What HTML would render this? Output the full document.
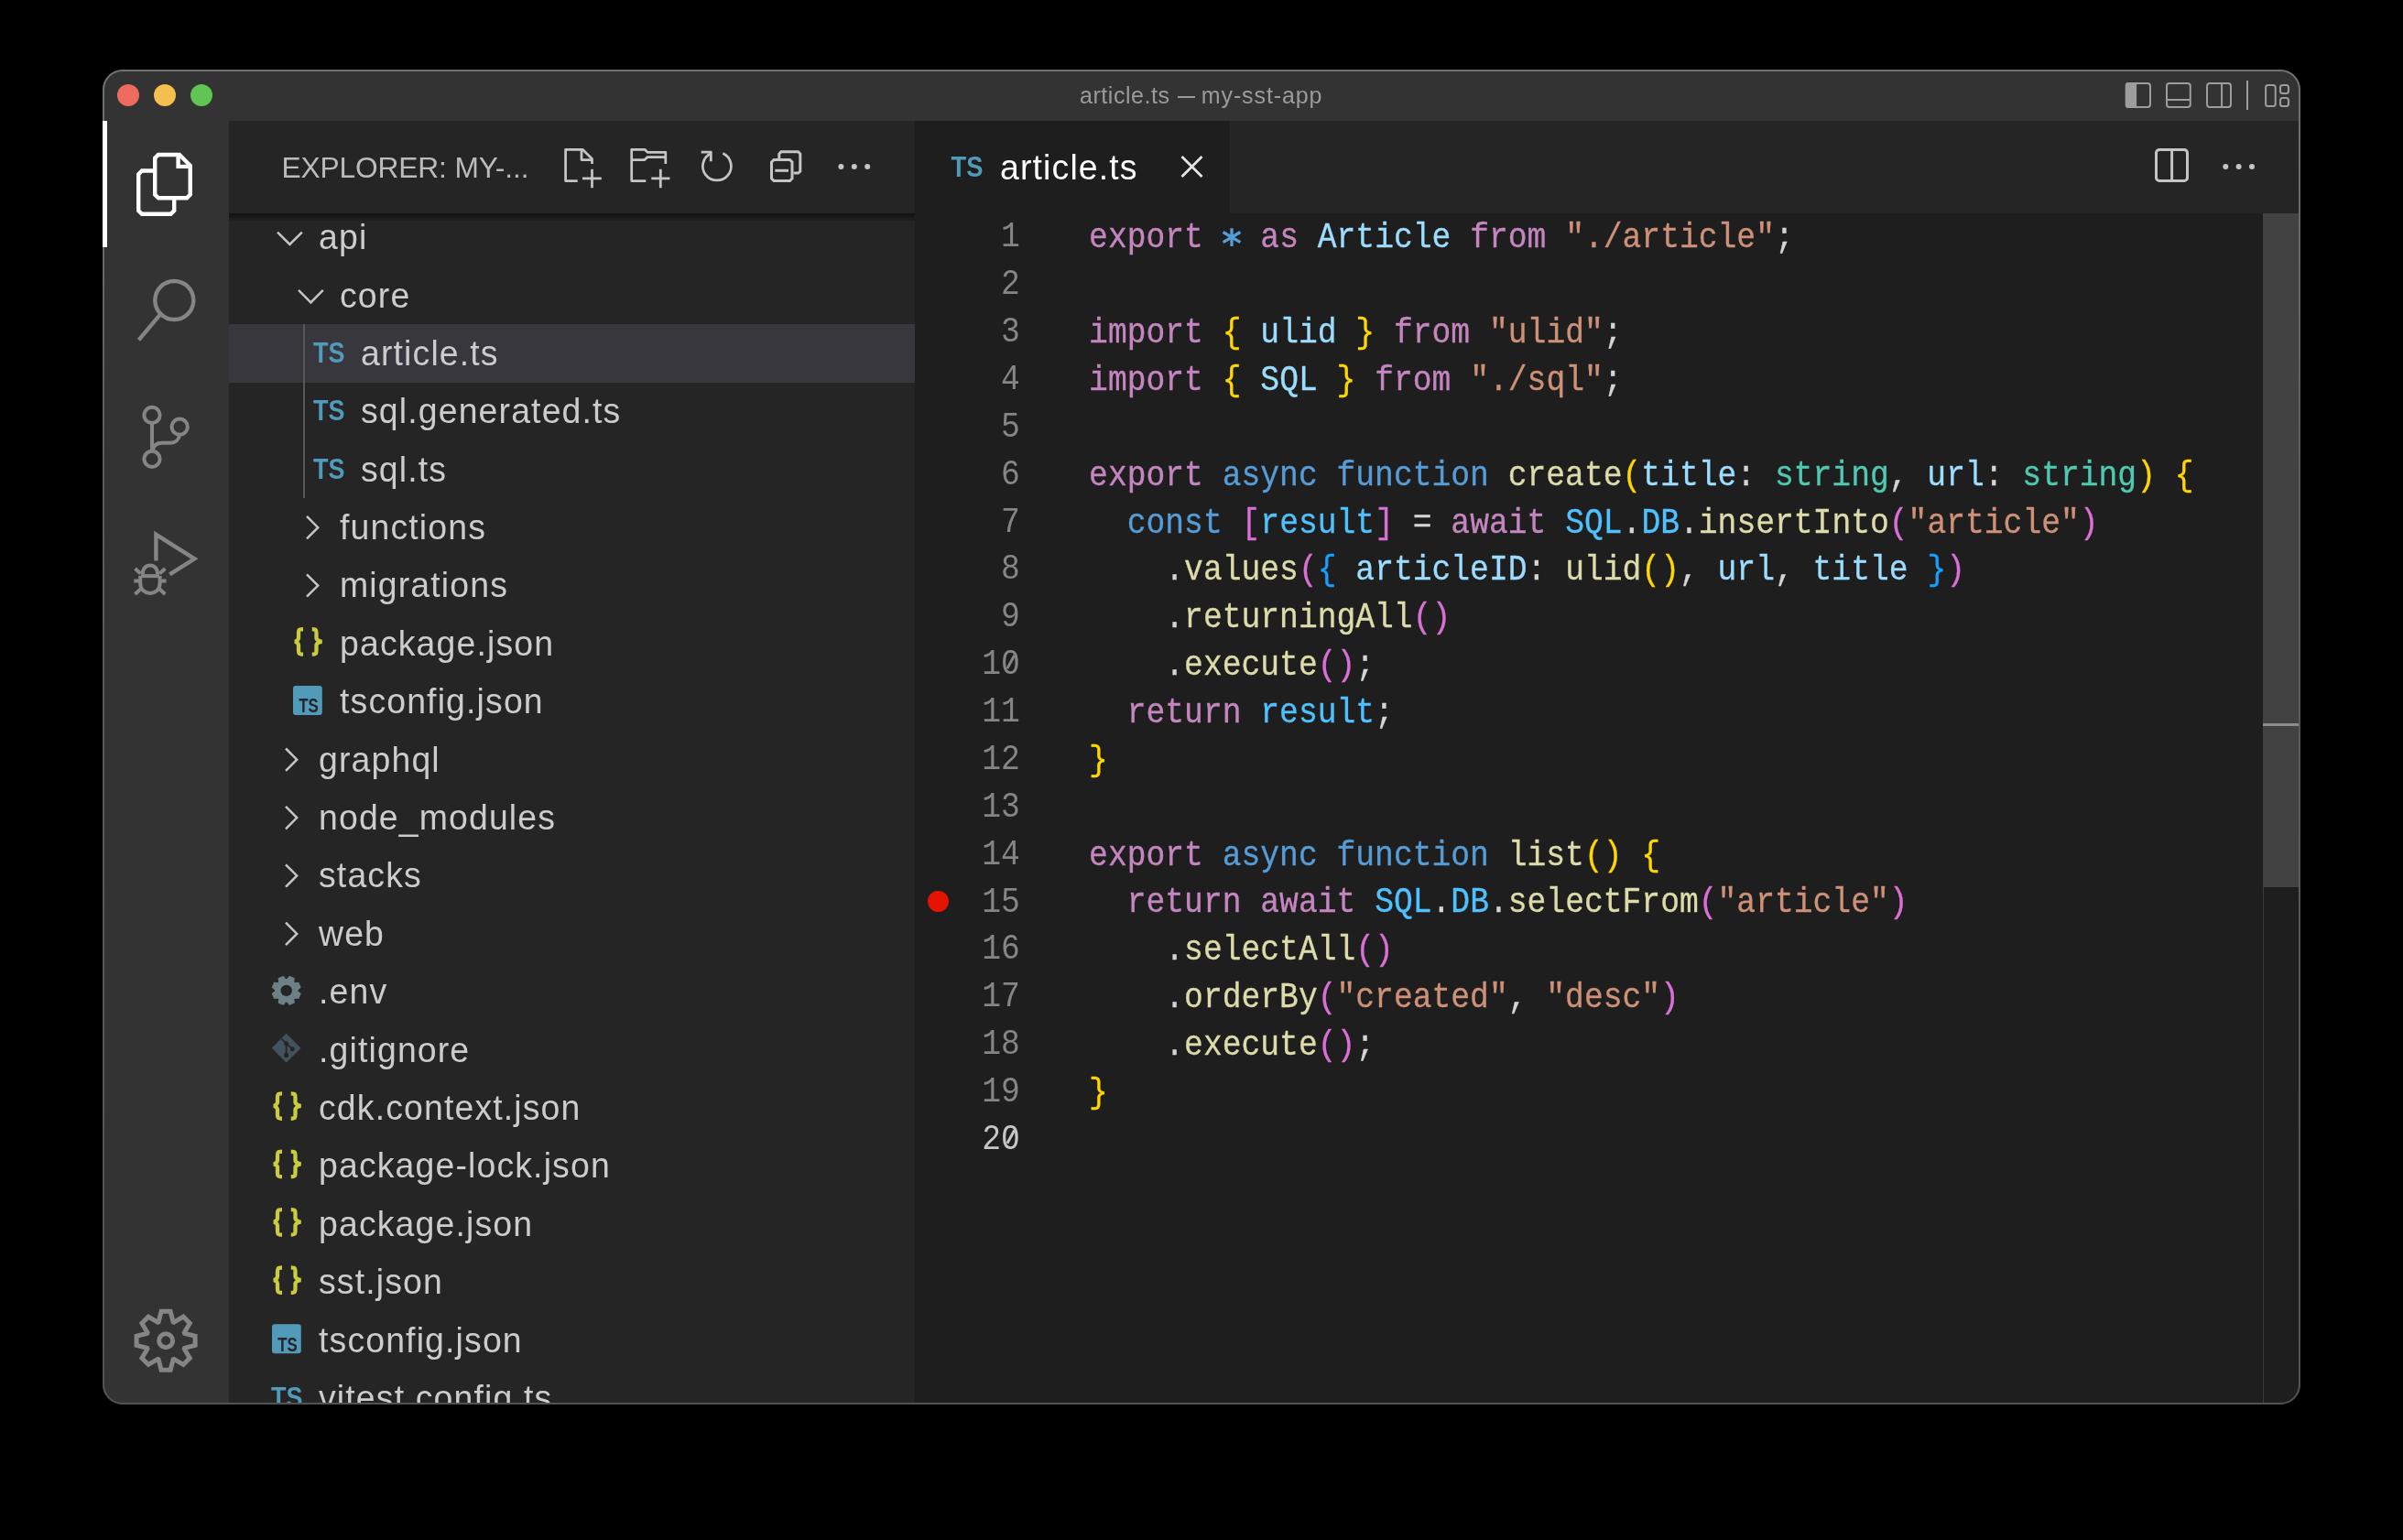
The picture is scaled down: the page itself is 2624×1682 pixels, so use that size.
<!DOCTYPE html>
<html><head><meta charset="utf-8"><title>article.ts — my-sst-app</title>
<style>
html,body{margin:0;padding:0;background:#000;width:2624px;height:1682px;overflow:hidden;position:relative}
.a{position:absolute}
.t{position:absolute;line-height:0;white-space:pre}
.ts{font-family:"Liberation Sans",sans-serif}
.tm{font-family:"Liberation Mono",monospace}
#win{position:absolute;left:0;top:0;width:2624px;height:1682px;will-change:transform;clip-path:inset(76px 112px 148px 112px round 22px)}
.k{color:#c586c0}.s{color:#569cd6}.v{color:#9cdcfe}.c{color:#4fc1ff}.f{color:#dcdcaa}.q{color:#ce9178}.y{color:#4ec9b0}.p{color:#d4d4d4}
.b1{color:#ffd700}.b2{color:#da70d6}.b3{color:#179fff}
</style></head><body>
<div id="win">
<div class="a" style="left:112px;top:76px;width:2400px;height:56px;background:#333333;"></div>
<div class="a" style="left:112px;top:132px;width:138px;height:1402px;background:#333333;"></div>
<div class="a" style="left:250px;top:132px;width:749px;height:1402px;background:#252526;"></div>
<div class="a" style="left:999px;top:132px;width:1513px;height:101px;background:#252526;"></div>
<div class="a" style="left:999px;top:132px;width:344px;height:101px;background:#1e1e1e;"></div>
<div class="a" style="left:999px;top:233px;width:1513px;height:1301px;background:#1e1e1e;"></div>
<div class="a" style="left:250px;top:233px;width:749px;height:8px;background:linear-gradient(#111111,#1a1a1a 55%,#202020)"></div>
<div class="a" style="left:250px;top:354.28px;width:749px;height:63.39px;background:#37373d;"></div>
<div class="a" style="left:331px;top:354.28px;width:1.5px;height:190.17000000000002px;background:#585858;"></div>
<div class="t ts" style="left:348.00px;top:259.14px;font-size:37.4px;color:#cccccc;letter-spacing:1.15px;transform:scaleY(1.03);transform-origin:0 12.96px;">api</div>
<div class="t ts" style="left:371.00px;top:322.53px;font-size:37.4px;color:#cccccc;letter-spacing:1.15px;transform:scaleY(1.03);transform-origin:0 12.96px;">core</div>
<div class="t ts" style="left:394.00px;top:385.92px;font-size:37.4px;color:#cccccc;letter-spacing:1.15px;transform:scaleY(1.03);transform-origin:0 12.96px;">article.ts</div>
<div class="t ts" style="left:394.00px;top:449.31px;font-size:37.4px;color:#cccccc;letter-spacing:1.15px;transform:scaleY(1.03);transform-origin:0 12.96px;">sql.generated.ts</div>
<div class="t ts" style="left:394.00px;top:512.70px;font-size:37.4px;color:#cccccc;letter-spacing:1.15px;transform:scaleY(1.03);transform-origin:0 12.96px;">sql.ts</div>
<div class="t ts" style="left:371.00px;top:576.09px;font-size:37.4px;color:#cccccc;letter-spacing:1.15px;transform:scaleY(1.03);transform-origin:0 12.96px;">functions</div>
<div class="t ts" style="left:371.00px;top:639.48px;font-size:37.4px;color:#cccccc;letter-spacing:1.15px;transform:scaleY(1.03);transform-origin:0 12.96px;">migrations</div>
<div class="t ts" style="left:371.00px;top:702.87px;font-size:37.4px;color:#cccccc;letter-spacing:1.15px;transform:scaleY(1.03);transform-origin:0 12.96px;">package.json</div>
<div class="t ts" style="left:371.00px;top:766.26px;font-size:37.4px;color:#cccccc;letter-spacing:1.15px;transform:scaleY(1.03);transform-origin:0 12.96px;">tsconfig.json</div>
<div class="t ts" style="left:348.00px;top:829.65px;font-size:37.4px;color:#cccccc;letter-spacing:1.15px;transform:scaleY(1.03);transform-origin:0 12.96px;">graphql</div>
<div class="t ts" style="left:348.00px;top:893.04px;font-size:37.4px;color:#cccccc;letter-spacing:1.15px;transform:scaleY(1.03);transform-origin:0 12.96px;">node_modules</div>
<div class="t ts" style="left:348.00px;top:956.43px;font-size:37.4px;color:#cccccc;letter-spacing:1.15px;transform:scaleY(1.03);transform-origin:0 12.96px;">stacks</div>
<div class="t ts" style="left:348.00px;top:1019.82px;font-size:37.4px;color:#cccccc;letter-spacing:1.15px;transform:scaleY(1.03);transform-origin:0 12.96px;">web</div>
<div class="t ts" style="left:348.00px;top:1083.21px;font-size:37.4px;color:#cccccc;letter-spacing:1.15px;transform:scaleY(1.03);transform-origin:0 12.96px;">.env</div>
<div class="t ts" style="left:348.00px;top:1146.60px;font-size:37.4px;color:#cccccc;letter-spacing:1.15px;transform:scaleY(1.03);transform-origin:0 12.96px;">.gitignore</div>
<div class="t ts" style="left:348.00px;top:1209.99px;font-size:37.4px;color:#cccccc;letter-spacing:1.15px;transform:scaleY(1.03);transform-origin:0 12.96px;">cdk.context.json</div>
<div class="t ts" style="left:348.00px;top:1273.38px;font-size:37.4px;color:#cccccc;letter-spacing:1.15px;transform:scaleY(1.03);transform-origin:0 12.96px;">package-lock.json</div>
<div class="t ts" style="left:348.00px;top:1336.77px;font-size:37.4px;color:#cccccc;letter-spacing:1.15px;transform:scaleY(1.03);transform-origin:0 12.96px;">package.json</div>
<div class="t ts" style="left:348.00px;top:1400.16px;font-size:37.4px;color:#cccccc;letter-spacing:1.15px;transform:scaleY(1.03);transform-origin:0 12.96px;">sst.json</div>
<div class="t ts" style="left:348.00px;top:1463.55px;font-size:37.4px;color:#cccccc;letter-spacing:1.15px;transform:scaleY(1.03);transform-origin:0 12.96px;">tsconfig.json</div>
<div class="t ts" style="left:348.00px;top:1526.94px;font-size:37.4px;color:#cccccc;letter-spacing:1.15px;transform:scaleY(1.03);transform-origin:0 12.96px;">vitest.config.ts</div>
<div class="t ts" style="left:1179.00px;top:104.34px;font-size:25px;color:#9b9b9b;letter-spacing:0.55px;">article.ts</div>
<div class="a" style="left:1285.6px;top:104.6px;width:19.4px;height:2px;background:#9b9b9b;"></div>
<div class="t ts" style="left:1311.75px;top:104.34px;font-size:25px;color:#9b9b9b;letter-spacing:0.9px;">my-sst-app</div>
<div class="t ts" style="left:307.50px;top:183.32px;font-size:31.7px;color:#bbbbbb;letter-spacing:-0.12px;">EXPLORER: MY-...</div>
<div class="t ts" style="left:1092.00px;top:182.94px;font-size:37.4px;color:#ffffff;letter-spacing:1.15px;transform:scaleY(1.03);transform-origin:0 12.96px;">article.ts</div>
<div class="t tm" style="left:1093.10px;top:260.47px;font-size:34.67px;color:#858585;letter-spacing:0px;transform:scaleY(1.12);transform-origin:0 9.23px;">1</div>
<div class="t tm" style="left:1189.10px;top:261.37px;font-size:34.67px;color:#d4d4d4;letter-spacing:0px;transform:scaleY(1.11);transform-origin:0 9.23px;-webkit-text-stroke:0.3px currentColor;"><span class="k">export</span><span class="p"> </span><span class="s"> </span><span class="p"> </span><span class="k">as</span><span class="p"> </span><span class="v">Article</span><span class="p"> </span><span class="k">from</span><span class="p"> </span><span class="q">&quot;./article&quot;</span><span class="p">;</span></div>
<div class="t tm" style="left:1093.10px;top:312.33px;font-size:34.67px;color:#858585;letter-spacing:0px;transform:scaleY(1.12);transform-origin:0 9.23px;">2</div>
<div class="t tm" style="left:1093.10px;top:364.19px;font-size:34.67px;color:#858585;letter-spacing:0px;transform:scaleY(1.12);transform-origin:0 9.23px;">3</div>
<div class="t tm" style="left:1189.10px;top:365.09px;font-size:34.67px;color:#d4d4d4;letter-spacing:0px;transform:scaleY(1.11);transform-origin:0 9.23px;-webkit-text-stroke:0.3px currentColor;"><span class="k">import</span><span class="p"> </span><span class="b1">{</span><span class="p"> </span><span class="v">ulid</span><span class="p"> </span><span class="b1">}</span><span class="p"> </span><span class="k">from</span><span class="p"> </span><span class="q">&quot;ulid&quot;</span><span class="p">;</span></div>
<div class="t tm" style="left:1093.10px;top:416.05px;font-size:34.67px;color:#858585;letter-spacing:0px;transform:scaleY(1.12);transform-origin:0 9.23px;">4</div>
<div class="t tm" style="left:1189.10px;top:416.95px;font-size:34.67px;color:#d4d4d4;letter-spacing:0px;transform:scaleY(1.11);transform-origin:0 9.23px;-webkit-text-stroke:0.3px currentColor;"><span class="k">import</span><span class="p"> </span><span class="b1">{</span><span class="p"> </span><span class="v">SQL</span><span class="p"> </span><span class="b1">}</span><span class="p"> </span><span class="k">from</span><span class="p"> </span><span class="q">&quot;./sql&quot;</span><span class="p">;</span></div>
<div class="t tm" style="left:1093.10px;top:467.91px;font-size:34.67px;color:#858585;letter-spacing:0px;transform:scaleY(1.12);transform-origin:0 9.23px;">5</div>
<div class="t tm" style="left:1093.10px;top:519.77px;font-size:34.67px;color:#858585;letter-spacing:0px;transform:scaleY(1.12);transform-origin:0 9.23px;">6</div>
<div class="t tm" style="left:1189.10px;top:520.67px;font-size:34.67px;color:#d4d4d4;letter-spacing:0px;transform:scaleY(1.11);transform-origin:0 9.23px;-webkit-text-stroke:0.3px currentColor;"><span class="k">export</span><span class="p"> </span><span class="s">async</span><span class="p"> </span><span class="s">function</span><span class="p"> </span><span class="f">create</span><span class="b1">(</span><span class="v">title</span><span class="p">: </span><span class="y">string</span><span class="p">, </span><span class="v">url</span><span class="p">: </span><span class="y">string</span><span class="b1">)</span><span class="p"> </span><span class="b1">{</span></div>
<div class="t tm" style="left:1093.10px;top:571.63px;font-size:34.67px;color:#858585;letter-spacing:0px;transform:scaleY(1.12);transform-origin:0 9.23px;">7</div>
<div class="t tm" style="left:1189.10px;top:572.53px;font-size:34.67px;color:#d4d4d4;letter-spacing:0px;transform:scaleY(1.11);transform-origin:0 9.23px;-webkit-text-stroke:0.3px currentColor;"><span class="p">  </span><span class="s">const</span><span class="p"> </span><span class="b2">[</span><span class="c">result</span><span class="b2">]</span><span class="p"> = </span><span class="k">await</span><span class="p"> </span><span class="c">SQL</span><span class="p">.</span><span class="c">DB</span><span class="p">.</span><span class="f">insertInto</span><span class="b2">(</span><span class="q">&quot;article&quot;</span><span class="b2">)</span></div>
<div class="t tm" style="left:1093.10px;top:623.49px;font-size:34.67px;color:#858585;letter-spacing:0px;transform:scaleY(1.12);transform-origin:0 9.23px;">8</div>
<div class="t tm" style="left:1189.10px;top:624.39px;font-size:34.67px;color:#d4d4d4;letter-spacing:0px;transform:scaleY(1.11);transform-origin:0 9.23px;-webkit-text-stroke:0.3px currentColor;"><span class="p">    .</span><span class="f">values</span><span class="b2">(</span><span class="b3">{</span><span class="p"> </span><span class="v">articleID</span><span class="p">: </span><span class="f">ulid</span><span class="b1">()</span><span class="p">, </span><span class="v">url</span><span class="p">, </span><span class="v">title</span><span class="p"> </span><span class="b3">}</span><span class="b2">)</span></div>
<div class="t tm" style="left:1093.10px;top:675.35px;font-size:34.67px;color:#858585;letter-spacing:0px;transform:scaleY(1.12);transform-origin:0 9.23px;">9</div>
<div class="t tm" style="left:1189.10px;top:676.25px;font-size:34.67px;color:#d4d4d4;letter-spacing:0px;transform:scaleY(1.11);transform-origin:0 9.23px;-webkit-text-stroke:0.3px currentColor;"><span class="p">    .</span><span class="f">returningAll</span><span class="b2">()</span></div>
<div class="t tm" style="left:1072.30px;top:727.21px;font-size:34.67px;color:#858585;letter-spacing:0px;transform:scaleY(1.12);transform-origin:0 9.23px;">10</div>
<div class="t tm" style="left:1189.10px;top:728.11px;font-size:34.67px;color:#d4d4d4;letter-spacing:0px;transform:scaleY(1.11);transform-origin:0 9.23px;-webkit-text-stroke:0.3px currentColor;"><span class="p">    .</span><span class="f">execute</span><span class="b2">()</span><span class="p">;</span></div>
<div class="t tm" style="left:1072.30px;top:779.07px;font-size:34.67px;color:#858585;letter-spacing:0px;transform:scaleY(1.12);transform-origin:0 9.23px;">11</div>
<div class="t tm" style="left:1189.10px;top:779.97px;font-size:34.67px;color:#d4d4d4;letter-spacing:0px;transform:scaleY(1.11);transform-origin:0 9.23px;-webkit-text-stroke:0.3px currentColor;"><span class="p">  </span><span class="k">return</span><span class="p"> </span><span class="c">result</span><span class="p">;</span></div>
<div class="t tm" style="left:1072.30px;top:830.93px;font-size:34.67px;color:#858585;letter-spacing:0px;transform:scaleY(1.12);transform-origin:0 9.23px;">12</div>
<div class="t tm" style="left:1189.10px;top:831.83px;font-size:34.67px;color:#d4d4d4;letter-spacing:0px;transform:scaleY(1.11);transform-origin:0 9.23px;-webkit-text-stroke:0.3px currentColor;"><span class="b1">}</span></div>
<div class="t tm" style="left:1072.30px;top:882.79px;font-size:34.67px;color:#858585;letter-spacing:0px;transform:scaleY(1.12);transform-origin:0 9.23px;">13</div>
<div class="t tm" style="left:1072.30px;top:934.65px;font-size:34.67px;color:#858585;letter-spacing:0px;transform:scaleY(1.12);transform-origin:0 9.23px;">14</div>
<div class="t tm" style="left:1189.10px;top:935.55px;font-size:34.67px;color:#d4d4d4;letter-spacing:0px;transform:scaleY(1.11);transform-origin:0 9.23px;-webkit-text-stroke:0.3px currentColor;"><span class="k">export</span><span class="p"> </span><span class="s">async</span><span class="p"> </span><span class="s">function</span><span class="p"> </span><span class="f">list</span><span class="b1">()</span><span class="p"> </span><span class="b1">{</span></div>
<div class="t tm" style="left:1072.30px;top:986.51px;font-size:34.67px;color:#858585;letter-spacing:0px;transform:scaleY(1.12);transform-origin:0 9.23px;">15</div>
<div class="t tm" style="left:1189.10px;top:987.41px;font-size:34.67px;color:#d4d4d4;letter-spacing:0px;transform:scaleY(1.11);transform-origin:0 9.23px;-webkit-text-stroke:0.3px currentColor;"><span class="p">  </span><span class="k">return</span><span class="p"> </span><span class="k">await</span><span class="p"> </span><span class="c">SQL</span><span class="p">.</span><span class="c">DB</span><span class="p">.</span><span class="f">selectFrom</span><span class="b2">(</span><span class="q">&quot;article&quot;</span><span class="b2">)</span></div>
<div class="t tm" style="left:1072.30px;top:1038.37px;font-size:34.67px;color:#858585;letter-spacing:0px;transform:scaleY(1.12);transform-origin:0 9.23px;">16</div>
<div class="t tm" style="left:1189.10px;top:1039.27px;font-size:34.67px;color:#d4d4d4;letter-spacing:0px;transform:scaleY(1.11);transform-origin:0 9.23px;-webkit-text-stroke:0.3px currentColor;"><span class="p">    .</span><span class="f">selectAll</span><span class="b2">()</span></div>
<div class="t tm" style="left:1072.30px;top:1090.23px;font-size:34.67px;color:#858585;letter-spacing:0px;transform:scaleY(1.12);transform-origin:0 9.23px;">17</div>
<div class="t tm" style="left:1189.10px;top:1091.13px;font-size:34.67px;color:#d4d4d4;letter-spacing:0px;transform:scaleY(1.11);transform-origin:0 9.23px;-webkit-text-stroke:0.3px currentColor;"><span class="p">    .</span><span class="f">orderBy</span><span class="b2">(</span><span class="q">&quot;created&quot;</span><span class="p">, </span><span class="q">&quot;desc&quot;</span><span class="b2">)</span></div>
<div class="t tm" style="left:1072.30px;top:1142.09px;font-size:34.67px;color:#858585;letter-spacing:0px;transform:scaleY(1.12);transform-origin:0 9.23px;">18</div>
<div class="t tm" style="left:1189.10px;top:1142.99px;font-size:34.67px;color:#d4d4d4;letter-spacing:0px;transform:scaleY(1.11);transform-origin:0 9.23px;-webkit-text-stroke:0.3px currentColor;"><span class="p">    .</span><span class="f">execute</span><span class="b2">()</span><span class="p">;</span></div>
<div class="t tm" style="left:1072.30px;top:1193.95px;font-size:34.67px;color:#858585;letter-spacing:0px;transform:scaleY(1.12);transform-origin:0 9.23px;">19</div>
<div class="t tm" style="left:1189.10px;top:1194.85px;font-size:34.67px;color:#d4d4d4;letter-spacing:0px;transform:scaleY(1.11);transform-origin:0 9.23px;-webkit-text-stroke:0.3px currentColor;"><span class="b1">}</span></div>
<div class="t tm" style="left:1072.30px;top:1245.81px;font-size:34.67px;color:#c6c6c6;letter-spacing:0px;transform:scaleY(1.12);transform-origin:0 9.23px;">20</div>
<div class="a" style="left:1013px;top:973px;width:23px;height:23px;border-radius:50%;background:#e51400"></div>
<div class="a" style="left:2471px;top:233px;width:1px;height:1301px;background:#3a3a3a;"></div>
<div class="a" style="left:2471px;top:233px;width:40px;height:736px;background:#424242;"></div>
<div class="a" style="left:2471px;top:790px;width:40px;height:3px;background:#8c8c8c;"></div>
<svg class="a" style="left:0;top:0" width="2624" height="1682" viewBox="0 0 2624 1682"><circle cx="140" cy="104" r="12" fill="#ed6a5e"/><circle cx="180" cy="104" r="12" fill="#f5bf4f"/><circle cx="220" cy="104" r="12" fill="#61c554"/><g fill="none" stroke="#ffffff" stroke-width="4.4" stroke-linejoin="miter"><path d="M172.8,169 L195.9,169 L207.7,180.8 L207.7,212.5 L204,216.3 L173,216.3 L169.2,212.5 L169.2,172.6 Z"/><path d="M194.6,169 L194.6,181.9 L207.7,181.9"/><path d="M169.2,186.5 L155,186.5 L151.2,190.3 L151.2,230 L155,233.8 L186.4,233.8 L190.2,230 L190.2,216.3"/></g><g fill="none" stroke="#858585" stroke-width="4.4"><circle cx="190.3" cy="328" r="21"/><path d="M175.4,342.9 L151.5,371.3"/></g><g fill="none" stroke="#858585" stroke-width="4"><circle cx="166" cy="453.4" r="8.6"/><circle cx="196.2" cy="466.2" r="8.6"/><circle cx="166" cy="501.3" r="8.6"/><path d="M166,462 L166,492.7"/><path d="M166.5,492 C167.5,487 171,483.8 177,483.8 L186,483.8 C191.5,483.8 195.5,480 196.2,474.8"/></g><g fill="none" stroke="#858585" stroke-width="4.4" stroke-linejoin="miter"><path d="M170.4,612.5 L170.4,583.8 L212.4,610.3 L185.3,627.3"/></g><g fill="none" stroke="#858585" stroke-width="4"><path d="M155.8,627 C155.8,621 159.4,617.4 163.9,617.4 C168.4,617.4 172,621 172,627"/><path d="M153.8,629.1 L174,629.1"/><path d="M153.2,629 L153.2,637 C153.2,643.5 157.8,647.9 163.9,647.9 C170,647.9 174.6,643.5 174.6,637 L174.6,629"/><path d="M147.5,621 L153.5,626.5 M146.3,634.6 L152,634.6 M147.5,649 L154.5,642.5"/><path d="M180.3,621 L174.3,626.5 M181.5,634.6 L175.8,634.6 M180.3,649 L173.3,642.5"/></g><polygon points="173.10,1443.80 176.10,1432.30 186.10,1432.30 189.10,1443.80 189.94,1444.15 200.19,1438.14 207.26,1445.21 201.25,1455.46 201.60,1456.30 213.10,1459.30 213.10,1469.30 201.60,1472.30 201.25,1473.14 207.26,1483.39 200.19,1490.46 189.94,1484.45 189.10,1484.80 186.10,1496.30 176.10,1496.30 173.10,1484.80 172.26,1484.45 162.01,1490.46 154.94,1483.39 160.95,1473.14 160.60,1472.30 149.10,1469.30 149.10,1459.30 160.60,1456.30 160.95,1455.46 154.94,1445.21 162.01,1438.14 172.26,1444.15" fill="none" stroke="#858585" stroke-width="5" stroke-linejoin="miter"/><circle cx="181.1" cy="1464.3" r="7.5" fill="none" stroke="#858585" stroke-width="5"/><path d="M1345.00,249.30 L1345.00,268.90 M1335.60,253.50 L1354.40,264.70 M1335.60,264.70 L1354.40,253.50" stroke="#569cd6" stroke-width="3.3" fill="none"/><rect x="1100.00" y="718.84" width="7" height="9" fill="#1e1e1e"/><path d="M1107.70,715.84 L1099.90,730.14" stroke="#858585" stroke-width="3" fill="none"/><rect x="1100.00" y="1237.44" width="7" height="9" fill="#1e1e1e"/><path d="M1107.70,1234.44 L1099.90,1248.74" stroke="#c6c6c6" stroke-width="3" fill="none"/><g fill="none" stroke="#c5c5c5" stroke-width="2.75" stroke-linejoin="round"><path d="M630.7,197.6 L617.6,197.6 L617.6,163.3 L636.2,163.3 L646.5,173.4 L646.5,179"/><path d="M635,163.3 L635,174.5 L646.5,174.5"/><path d="M646.5,184.8 L646.5,205.2 M636,194.9 L656.8,194.9"/><path d="M705.3,197.6 L689.7,197.6 L689.7,163.3 L704,163.3 L707,166.3 L726.8,166.3 L726.8,179"/><path d="M689.7,174.5 L704,174.5 L707,171.6 L726.8,171.6"/><path d="M721.3,184.8 L721.3,205.2 M711.3,194.9 L731.4,194.9"/><path d="M789.4,167.4 A15.5,15.5 0 1 1 776.4,167.4"/><path d="M765.7,166.2 L776.3,166.2 L776.3,176.3"/></g><g fill="none" stroke="#c5c5c5" stroke-width="3" stroke-linejoin="miter"><path d="M850.8,173 L850.8,168 L853,165.8 L871.6,165.8 L873.8,168 L873.8,187 L871.6,189.1 L866.6,189.1"/><path d="M845,174.5 L862.5,174.5 L865,177 L865,195 L862.5,197.5 L845,197.5 L842.5,195 L842.5,177 Z"/><path d="M846.3,186.3 L861,186.3"/></g><circle cx="918.4" cy="182" r="3" fill="#c5c5c5"/><circle cx="932.8" cy="182" r="3" fill="#c5c5c5"/><circle cx="947.2" cy="182" r="3" fill="#c5c5c5"/><g fill="none" stroke="#9d9d9d" stroke-width="2"><rect x="2321.8" y="90.9" width="26.2" height="26.1" rx="3"/><rect x="2366" y="90.9" width="25.8" height="26.1" rx="3"/><path d="M2366,109 L2391.8,109"/><rect x="2410" y="90.9" width="26" height="26.1" rx="3"/><path d="M2426.1,90.9 L2426.1,117"/><path d="M2454,88 L2454,120"/><rect x="2474.1" y="93" width="10.6" height="23.1" rx="2.5"/><rect x="2490" y="93" width="9" height="9" rx="2.5"/><rect x="2490" y="107.1" width="9" height="9" rx="2.5"/></g><path d="M2324,90 L2333.1,90 L2333.1,118 L2324,118 Q2320.8,118 2320.8,115 L2320.8,93 Q2320.8,90 2324,90 Z" fill="#9d9d9d"/><g fill="none" stroke="#c5c5c5" stroke-width="3"><rect x="2354.5" y="163.5" width="34" height="34" rx="3.5"/><path d="M2371.6,163.5 L2371.6,197.5"/></g><circle cx="2430.3" cy="182" r="3" fill="#c5c5c5"/><circle cx="2444.6" cy="182" r="3" fill="#c5c5c5"/><circle cx="2459" cy="182" r="3" fill="#c5c5c5"/><path d="M1290.5,171 L1312.5,193 M1312.5,171 L1290.5,193" stroke="#e6e6e6" stroke-width="2.8" fill="none"/><text x="1038.5" y="192.8" font-family="Liberation Sans" font-weight="bold" font-size="32" textLength="35" lengthAdjust="spacingAndGlyphs" fill="#519aba">TS</text><path d="M303.00,253.59 L316.40,267.00 L329.80,253.59" fill="none" stroke="#c5c5c5" stroke-width="2.5"/><path d="M326.00,316.98 L339.40,330.38 L352.80,316.98" fill="none" stroke="#c5c5c5" stroke-width="2.5"/><text x="341.90" y="395.77" font-family="Liberation Sans" font-weight="bold" font-size="30.9" textLength="34.5" lengthAdjust="spacingAndGlyphs" fill="#519aba">TS</text><text x="341.90" y="459.17" font-family="Liberation Sans" font-weight="bold" font-size="30.9" textLength="34.5" lengthAdjust="spacingAndGlyphs" fill="#519aba">TS</text><text x="341.90" y="522.55" font-family="Liberation Sans" font-weight="bold" font-size="30.9" textLength="34.5" lengthAdjust="spacingAndGlyphs" fill="#519aba">TS</text><path d="M335.00,563.95 L347.20,576.15 L335.00,588.35" fill="none" stroke="#c5c5c5" stroke-width="2.5"/><path d="M335.00,627.34 L347.20,639.54 L335.00,651.74" fill="none" stroke="#c5c5c5" stroke-width="2.5"/><path d="M331.00,687.23 C326.00,687.23 326.00,688.23 326.00,692.23 L326.00,696.73 C326.00,699.23 323.00,700.73 321.50,700.73 C323.00,700.73 326.00,702.23 326.00,704.73 L326.00,709.63 C326.00,713.63 326.00,714.63 331.00,714.63 M340.80,687.23 C345.50,687.23 345.50,688.23 345.50,692.23 L345.50,696.73 C345.50,699.23 350.30,700.73 351.80,700.73 C350.30,700.73 345.50,702.23 345.50,704.73 L345.50,709.63 C345.50,713.63 345.50,714.63 340.80,714.63" fill="none" stroke="#cbcb41" stroke-width="4.3"/><rect x="320.00" y="749.02" width="31.8" height="32" rx="3" fill="#519aba"/><text x="326.30" y="778.22" font-family="Liberation Sans" font-weight="bold" font-size="21.5" textLength="21.5" lengthAdjust="spacingAndGlyphs" fill="#252526">TS</text><path d="M312.00,817.50 L324.20,829.71 L312.00,841.91" fill="none" stroke="#c5c5c5" stroke-width="2.5"/><path d="M312.00,880.89 L324.20,893.10 L312.00,905.30" fill="none" stroke="#c5c5c5" stroke-width="2.5"/><path d="M312.00,944.28 L324.20,956.49 L312.00,968.69" fill="none" stroke="#c5c5c5" stroke-width="2.5"/><path d="M312.00,1007.68 L324.20,1019.88 L312.00,1032.08" fill="none" stroke="#c5c5c5" stroke-width="2.5"/><polygon points="313.77,1069.86 316.11,1066.83 320.92,1068.82 320.43,1072.62 321.95,1074.14 325.75,1073.65 327.74,1078.45 324.70,1080.79 324.70,1082.94 327.74,1085.28 325.75,1090.08 321.95,1089.59 320.43,1091.11 320.92,1094.91 316.11,1096.90 313.77,1093.87 311.63,1093.87 309.29,1096.90 304.48,1094.91 304.97,1091.11 303.45,1089.59 299.65,1090.08 297.66,1085.28 300.70,1082.94 300.70,1080.79 297.66,1078.45 299.65,1073.65 303.45,1074.14 304.97,1072.62 304.48,1068.82 309.29,1066.83 311.63,1069.86" fill="#6d8086" stroke="#6d8086" stroke-width="1.6" stroke-linejoin="round"/><circle cx="312.7" cy="1081.87" r="12.2" fill="#6d8086"/><circle cx="312.7" cy="1081.87" r="6.2" fill="#252526"/><path d="M312.6,1129.15 L328.1,1144.65 L312.6,1160.15 L297.1,1144.65 Z" fill="#41535b" stroke="#41535b" stroke-width="0.8" stroke-linejoin="round"/><path d="M307.5,1134.65 L312.6,1139.65 L312.6,1152.15 M312.6,1139.65 L319,1145.65" stroke="#252526" stroke-width="1.8" fill="none"/><circle cx="312.6" cy="1139.65" r="2.5" fill="#252526"/><circle cx="319.3" cy="1145.65" r="2.5" fill="#252526"/><circle cx="312.6" cy="1152.45" r="2.6" fill="#252526"/><path d="M308.00,1194.34 C303.00,1194.34 303.00,1195.34 303.00,1199.34 L303.00,1203.84 C303.00,1206.34 300.00,1207.84 298.50,1207.84 C300.00,1207.84 303.00,1209.34 303.00,1211.84 L303.00,1216.74 C303.00,1220.74 303.00,1221.74 308.00,1221.74 M317.80,1194.34 C322.50,1194.34 322.50,1195.34 322.50,1199.34 L322.50,1203.84 C322.50,1206.34 327.30,1207.84 328.80,1207.84 C327.30,1207.84 322.50,1209.34 322.50,1211.84 L322.50,1216.74 C322.50,1220.74 322.50,1221.74 317.80,1221.74" fill="none" stroke="#cbcb41" stroke-width="4.3"/><path d="M308.00,1257.73 C303.00,1257.73 303.00,1258.73 303.00,1262.73 L303.00,1267.23 C303.00,1269.73 300.00,1271.23 298.50,1271.23 C300.00,1271.23 303.00,1272.73 303.00,1275.23 L303.00,1280.13 C303.00,1284.13 303.00,1285.13 308.00,1285.13 M317.80,1257.73 C322.50,1257.73 322.50,1258.73 322.50,1262.73 L322.50,1267.23 C322.50,1269.73 327.30,1271.23 328.80,1271.23 C327.30,1271.23 322.50,1272.73 322.50,1275.23 L322.50,1280.13 C322.50,1284.13 322.50,1285.13 317.80,1285.13" fill="none" stroke="#cbcb41" stroke-width="4.3"/><path d="M308.00,1321.12 C303.00,1321.12 303.00,1322.12 303.00,1326.12 L303.00,1330.62 C303.00,1333.12 300.00,1334.62 298.50,1334.62 C300.00,1334.62 303.00,1336.12 303.00,1338.62 L303.00,1343.53 C303.00,1347.53 303.00,1348.53 308.00,1348.53 M317.80,1321.12 C322.50,1321.12 322.50,1322.12 322.50,1326.12 L322.50,1330.62 C322.50,1333.12 327.30,1334.62 328.80,1334.62 C327.30,1334.62 322.50,1336.12 322.50,1338.62 L322.50,1343.53 C322.50,1347.53 322.50,1348.53 317.80,1348.53" fill="none" stroke="#cbcb41" stroke-width="4.3"/><path d="M308.00,1384.51 C303.00,1384.51 303.00,1385.51 303.00,1389.51 L303.00,1394.01 C303.00,1396.51 300.00,1398.01 298.50,1398.01 C300.00,1398.01 303.00,1399.51 303.00,1402.01 L303.00,1406.91 C303.00,1410.91 303.00,1411.91 308.00,1411.91 M317.80,1384.51 C322.50,1384.51 322.50,1385.51 322.50,1389.51 L322.50,1394.01 C322.50,1396.51 327.30,1398.01 328.80,1398.01 C327.30,1398.01 322.50,1399.51 322.50,1402.01 L322.50,1406.91 C322.50,1410.91 322.50,1411.91 317.80,1411.91" fill="none" stroke="#cbcb41" stroke-width="4.3"/><rect x="297.00" y="1446.31" width="31.8" height="32" rx="3" fill="#519aba"/><text x="303.30" y="1475.51" font-family="Liberation Sans" font-weight="bold" font-size="21.5" textLength="21.5" lengthAdjust="spacingAndGlyphs" fill="#252526">TS</text><text x="295.90" y="1536.79" font-family="Liberation Sans" font-weight="bold" font-size="30.9" textLength="34.5" lengthAdjust="spacingAndGlyphs" fill="#519aba">TS</text></svg>
</div>
<svg class="a" style="left:0;top:0" width="2624" height="1682" viewBox="0 0 2624 1682"><defs><linearGradient id="bg" x1="0" y1="0" x2="0" y2="1"><stop offset="0" stop-color="#707070"/><stop offset="0.3" stop-color="#5c5c5c"/><stop offset="1" stop-color="#525252"/></linearGradient></defs><rect x="113" y="77" width="2398" height="1456" rx="21" ry="21" fill="none" stroke="url(#bg)" stroke-width="2"/></svg>
<div class="a" style="left:112px;top:132px;width:5px;height:138px;background:#ffffff"></div>
</body></html>
